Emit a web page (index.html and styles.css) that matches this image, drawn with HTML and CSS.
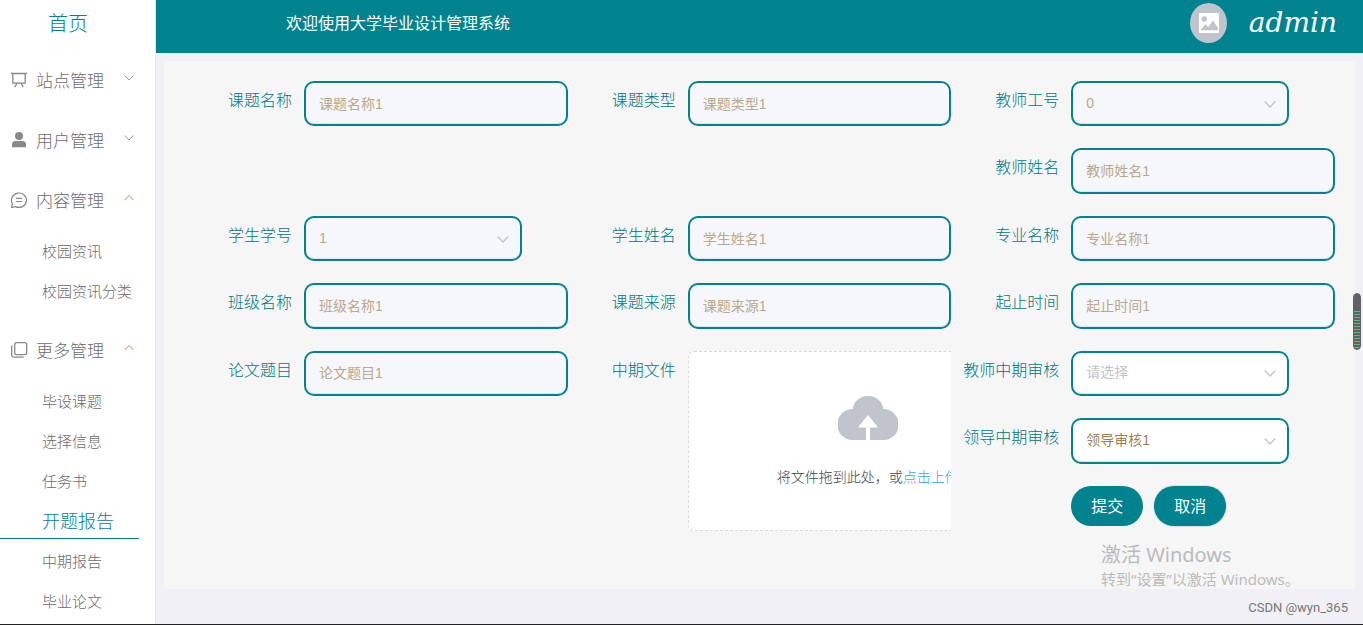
FILE: index.html
```html
<!DOCTYPE html>
<html lang="zh-CN">
<head>
<meta charset="utf-8">
<title>大学毕业设计管理系统</title>
<link rel="stylesheet" href="styles.css">
</head>
<body>
<div class="app">
  <nav class="sidebar">
    <a class="home" href="#">首页</a>
    <button class="group" type="button">
      <svg class="icon" viewBox="0 0 18 18" fill="none" stroke="currentColor" stroke-width="1.3"><path d="M1 2.5h16M2.8 2.5v9.7h12.4V2.5M6.8 12.5l-2 3.7M11.2 12.5l2 3.7"/></svg>
      <span>站点管理</span>
      <svg class="arrow" viewBox="0 0 10 10" fill="none" stroke="currentColor"><path d="M.7 2.5 5 7l4.300-4.500"/></svg>
    </button>
    <button class="group" type="button">
      <svg class="icon" viewBox="0 0 18 18" fill="currentColor"><circle cx="9" cy="5" r="4"/><path d="M2 16.300v-2.800a3.500 3.500 0 0 1 3.500-3.500h7a3.500 3.500 0 0 1 3.500 3.500v2.800z"/></svg>
      <span>用户管理</span>
      <svg class="arrow" viewBox="0 0 10 10" fill="none" stroke="currentColor"><path d="M.7 2.500 5 7l4.300-4.500"/></svg>
    </button>
    <button class="group" type="button">
      <svg class="icon" viewBox="0 0 18 18" fill="none" stroke="currentColor" stroke-width="1.200"><path d="M1.500 16.500l.9-3.800A7.500 7.200 0 1 1 5.500 15.600zM6 7.300h6M6 10.500h6"/></svg>
      <span>内容管理</span>
      <svg class="arrow open" viewBox="0 0 10 10" fill="none" stroke="currentColor"><path d="M.7 7 5 2.500 9.300 7"/></svg>
    </button>
    <ul class="submenu">
      <li><a href="#">校园资讯</a></li>
      <li><a href="#">校园资讯分类</a></li>
    </ul>
    <button class="group" type="button">
      <svg class="icon" viewBox="0 0 18 18" fill="none" stroke="currentColor" stroke-width="1.300"><rect x="4.700" y="1.700" width="12" height="12" rx="2"/><path d="M1.700 4.500v9.700a2 2 0 0 0 2 2h9.800"/></svg>
      <span>更多管理</span>
      <svg class="arrow open" viewBox="0 0 10 10" fill="none" stroke="currentColor"><path d="M.7 7 5 2.500 9.300 7"/></svg>
    </button>
    <ul class="submenu">
      <li><a href="#">毕设课题</a></li>
      <li><a href="#">选择信息</a></li>
      <li><a href="#">任务书</a></li>
      <li><a class="active" href="#">开题报告</a></li>
      <li><a href="#">中期报告</a></li>
      <li><a href="#">毕业论文</a></li>
    </ul>
  </nav>

  <div class="page">
    <header class="topbar">
      <span class="welcome">欢迎使用大学毕业设计管理系统</span>
      <div class="user">
        <svg class="avatar" viewBox="0 0 37 40"><ellipse cx="18.500" cy="20" rx="18.500" ry="20" fill="#c0c4cc"/><path d="M9 10h20v20H9z" fill="#fff"/><circle cx="14.300" cy="16" r="2.800" fill="#c0c4cc"/><path d="M10.500 27.300l4.800-6 3 2.700 4.700-6.500 4.800 7v2.800z" fill="#c0c4cc"/></svg>
        <span class="username">admin</span>
      </div>
    </header>

    <main class="content">
      <form class="form">
        <div class="field"><label for="f1">课题名称</label><input id="f1" value="课题名称1" disabled></div>
        <div class="field"><label for="f2">课题类型</label><input id="f2" value="课题类型1" disabled></div>
        <div class="field"><label for="f3">教师工号</label>
          <div class="select"><select id="f3" disabled><option>0</option></select><svg class="caret" viewBox="0 0 12 12" fill="none" stroke="currentColor" stroke-width="1.300"><path d="M.7 3.500 6 9l5.300-5.500"/></svg></div></div>
        <div class="field last"><label for="f4">教师姓名</label><input id="f4" value="教师姓名1" disabled></div>
        <div class="field"><label for="f5">学生学号</label>
          <div class="select"><select id="f5" disabled><option>1</option></select><svg class="caret" viewBox="0 0 12 12" fill="none" stroke="currentColor" stroke-width="1.300"><path d="M.7 3.500 6 9l5.300-5.500"/></svg></div></div>
        <div class="field"><label for="f6">学生姓名</label><input id="f6" value="学生姓名1" disabled></div>
        <div class="field"><label for="f7">专业名称</label><input id="f7" value="专业名称1" disabled></div>
        <div class="field"><label for="f8">班级名称</label><input id="f8" value="班级名称1" disabled></div>
        <div class="field"><label for="f9">课题来源</label><input id="f9" value="课题来源1" disabled></div>
        <div class="field"><label for="f10">起止时间</label><input id="f10" value="起止时间1" disabled></div>
        <div class="field"><label for="f11">论文题目</label><input id="f11" value="论文题目1" disabled></div>
        <div class="field tall"><span class="label">中期文件</span>
          <div class="upload"><div class="dropzone">
            <svg class="cloud" viewBox="0 0 60 44"><path d="M15 44A15.500 15.500 0 0 1 14.500 13 15.700 15.700 0 0 1 45.500 13 15.500 15.500 0 0 1 45 44H32V31.500h8L30 19 20 31.500h8V44z" fill="#c0c4cc"/></svg>
            <p>将文件拖到此处，或<a href="#">点击上传</a></p>
          </div></div></div>
        <div class="field last"><label for="f12">教师中期审核</label>
          <div class="select"><select id="f12" class="empty"><option>请选择</option></select><svg class="caret" viewBox="0 0 12 12" fill="none" stroke="currentColor" stroke-width="1.300"><path d="M.7 3.500 6 9l5.300-5.500"/></svg></div></div>
        <div class="field last"><label for="f13">领导中期审核</label>
          <div class="select"><select id="f13"><option>领导审核1</option></select><svg class="caret" viewBox="0 0 12 12" fill="none" stroke="currentColor" stroke-width="1.300"><path d="M.7 3.500 6 9l5.300-5.500"/></svg></div></div>
        <div class="actions last"><button type="submit">提交</button><button class="cancel" type="button">取消</button></div>
      </form>
    </main>
  </div>
</div>
<div class="activate"><p class="title">激活 Windows</p><p>转到“设置”以激活 Windows。</p></div>
<div class="credit">CSDN @wyn_365</div>
<div class="thumb"></div>
</body>
</html>
```

FILE: styles.css
```css
* { box-sizing: border-box; }
body {
  margin: 0;
  background: #f0f0f5;
  font-family: "Liberation Sans", "Noto Sans CJK SC", sans-serif;
}
p, ul { margin: 0; padding: 0; }
ul { list-style: none; }
a { text-decoration: none; }
button, input, select { font-family: inherit; margin: 0; }

.app {
  display: flex;
  min-height: 100vh;
  border-bottom: 1px solid #222;
}

.sidebar {
  flex: none;
  width: 156px;
  background: #fff;
  border-right: 1px solid #e4e4e8;
  color: #6c6c6c;
  font-weight: 300;
}
.home {
  display: block;
  width: 136px;
  height: 50px;
  line-height: 48px;
  text-align: center;
  font-size: 20px;
  color: #00838f;
}
.group {
  display: flex;
  align-items: center;
  width: 100%;
  height: 60px;
  padding: 0 21px 0 10px;
  border: 0;
  background: none;
  color: #6c6c6c;
  font-size: 17px;
  font-weight: 300;
}
.group span { padding-bottom: 2px; }
.icon { width: 18px; height: 18px; margin-right: 8px; color: #888; }
.arrow { width: 10px; height: 10px; margin: 0 0 4px auto; color: #9098a4; }
.arrow.open { color: #c08a60; }
.submenu + .group { margin-top: 10px; }
.submenu li { height: 40px; padding-right: 16px; }
.submenu a {
  display: block;
  height: 39px;
  line-height: 44px;
  padding-left: 42px;
  font-size: 15px;
  color: #6c6c6c;
}
.submenu .active {
  font-size: 18px;
  color: #00838f;
  border-bottom: 1px solid #00838f;
}

.page { flex: 1; min-width: 0; display: flex; flex-direction: column; }
.topbar {
  display: flex;
  justify-content: space-between;
  height: 53px;
  padding: 0 26px 0 130px;
  background: #00838f;
  color: #fff;
  line-height: 48px;
  font-size: 16px;
}
.user { display: flex; align-items: center; gap: 22px; height: 46px; }
.avatar { width: 37px; height: 40px; }
.username { font-family: "DejaVu Serif", serif; font-style: italic; font-size: 28px; }

.content { flex: 1; display: flex; padding: 8px 8px 35px; }
.form {
  flex: 1;
  display: grid;
  grid-template-columns: repeat(3, 1fr);
  grid-template-rows: repeat(7, 1fr);
  row-gap: 22px;
  padding: 20px 20px 58px;
  background: #f6f6f6;
}
.field { display: flex; min-width: 0; min-height: 0; }
.field.tall { grid-row: span 3; }
.last { grid-column: 3; }
.field label, .field .label {
  flex: none;
  width: 120px;
  padding-right: 12px;
  text-align: right;
  line-height: 40px;
  font-size: 16px;
  font-weight: 300;
  color: #00767f;
}
.field input, .field select {
  width: 100%;
  height: 100%;
  padding: 0 13px 2px;
  border: 2px solid #00838f;
  border-radius: 10px;
  outline: 0;
  background: #fff;
  box-shadow: inset 0 -2px 1px -1px #dfe3e8;
  color: #a08050;
  font-size: 14px;
  opacity: 1;
}
.field input { flex: 1; min-width: 0; }
.field select { appearance: none; }
.field input:disabled, .field select:disabled { background: #f5f7fa; color: #bca88a; }
.field select.empty { color: #c0c4cc; }
.select { position: relative; width: 218px; }
.caret {
  position: absolute;
  right: 13px;
  top: 50%;
  width: 12px;
  height: 12px;
  margin-top: -6px;
  color: #c0c4cc;
  pointer-events: none;
}
.upload { flex: 1; min-width: 0; overflow: hidden; }
.dropzone {
  display: flex;
  flex-direction: column;
  align-items: center;
  gap: 24px;
  width: 360px;
  height: 100%;
  padding-top: 44px;
  border: 1px dashed #d9d9d9;
  border-radius: 6px;
  background: #fff;
  font-size: 14px;
  font-weight: 300;
  color: #444;
}
.dropzone a { color: #409eff; }
.dropzone p { line-height: 26px; }
.cloud { width: 60px; height: 44px; }
.actions { display: flex; align-items: flex-start; gap: 11px; padding-left: 120px; }
.actions button {
  width: 72px;
  height: 40px;
  padding: 0 0 2px;
  border: 0;
  border-radius: 20px;
  background: #00838f;
  color: #fff;
  font-size: 16px;
}
.actions .cancel { box-shadow: 0 0 0 1px #dcdfe6; }

.activate {
  position: absolute;
  right: 62px;
  bottom: 34px;
  width: 200px;
  color: #bbb;
  font-family: "Noto Sans", "Noto Sans CJK SC", sans-serif;
  font-size: 15px;
  line-height: 24px;
  white-space: nowrap;
  pointer-events: none;
}
.activate .title { font-size: 20px; }
.credit {
  position: absolute;
  right: 15px;
  bottom: 8px;
  line-height: 18px;
  font-family: Roboto, sans-serif;
  font-size: 13px;
  color: #777;
}
.thumb {
  position: absolute;
  right: 2px;
  top: 293px;
  width: 8px;
  height: 57px;
  border-radius: 4px;
  background: linear-gradient(#606266 16px, transparent 16px), repeating-linear-gradient(#606266 0 2px, #67b878 2px 3px);
  border: 1px solid #606266;
}
```
